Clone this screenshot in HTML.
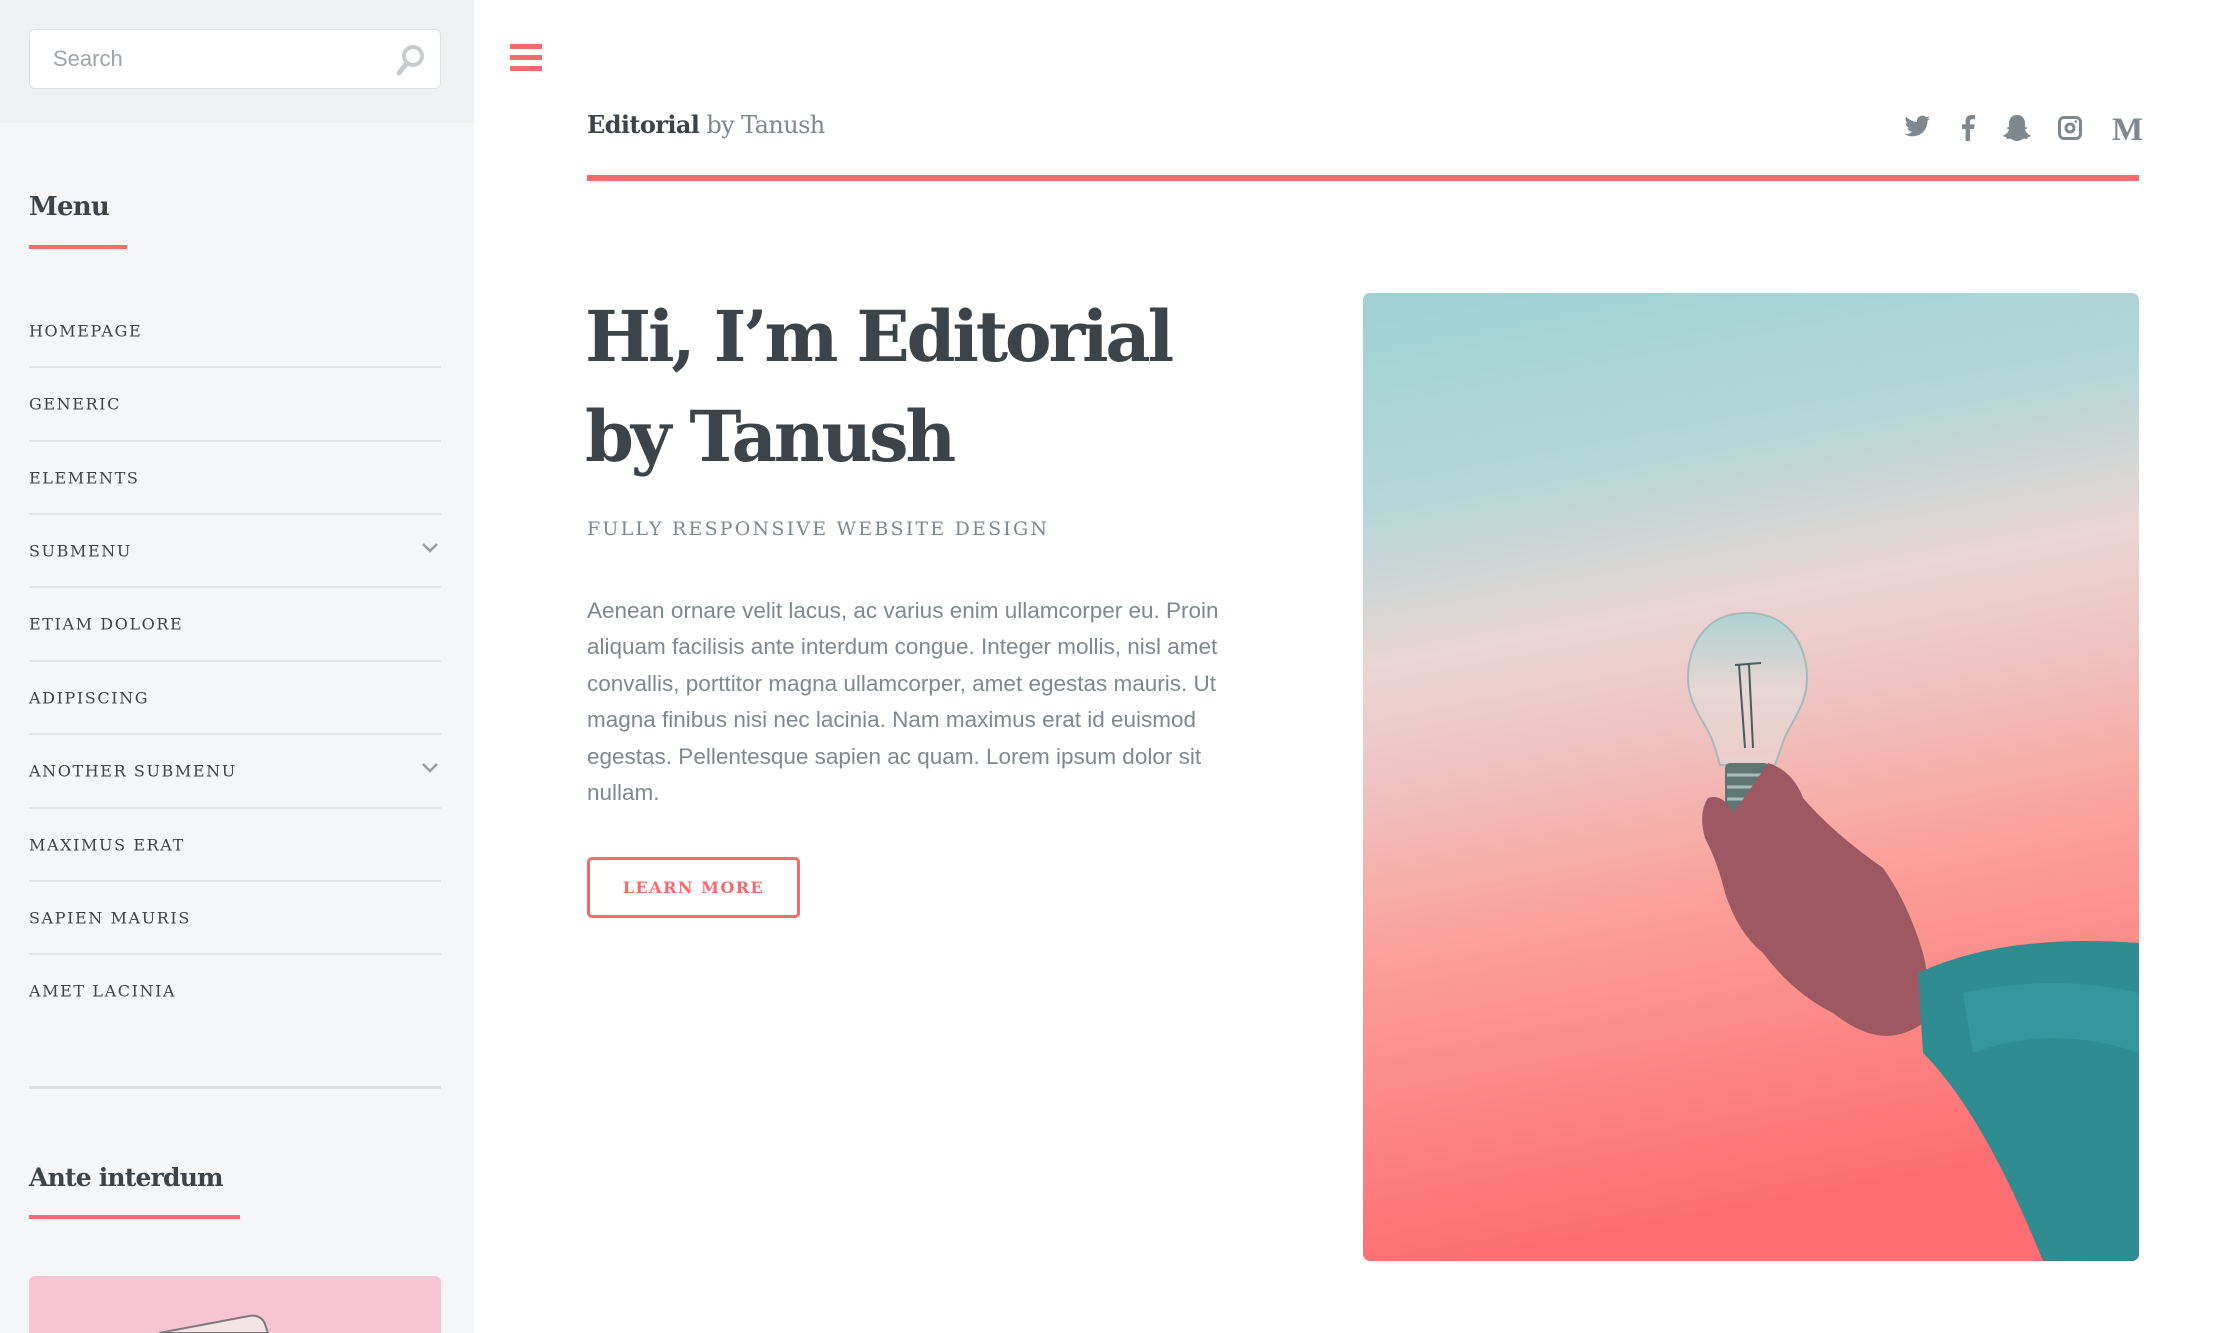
<!DOCTYPE html>
<html><head><meta charset="utf-8"><style>
*{margin:0;padding:0;box-sizing:border-box}
html,body{width:2217px;height:1333px;overflow:hidden;background:#fff}
body{position:relative;font-family:"Liberation Sans",sans-serif}
.serif{font-family:"DejaVu Serif","Liberation Serif",serif}
#side{position:absolute;left:0;top:0;width:474px;height:1333px;background:#f5f6f7;overflow:hidden}
#stop{position:absolute;left:0;top:0;width:474px;height:123px;background:#eff0f2}
#search{position:absolute;left:29px;top:29px;width:412px;height:60px;background:#fff;border:1px solid #dfe1e3;border-radius:6px}
#search span{position:absolute;left:23px;top:16px;font-size:22px;color:#9fa4a8}
.h2{position:absolute;left:29px;font-weight:bold;color:#3d4449;letter-spacing:-0.8px}
.ul{position:absolute;left:29px;height:4px;background:#f56a6a}
.mi{position:absolute;left:29px;width:412px;height:73px;font-size:16px;letter-spacing:1.6px;color:#3d4449}
.mi span{position:absolute;left:0;top:50%;transform:translateY(-50%)}
.sep{position:absolute;left:29px;width:412px;height:2px;background:#e3e5e7}
.chev{position:absolute;right:2px;top:50%;margin-top:-9px}
#ham div{position:absolute;left:510px;width:32px;height:5px;background:#f56a6a}
p.t{font-size:22.5px;line-height:36.4px;color:#7f888f}
</style></head><body>
<div id="side">
<div id="stop"></div>
<div id="search"><span>Search</span>
<svg style="position:absolute;right:14px;top:13px" width="32" height="34" viewBox="0 0 32 34"><circle cx="19" cy="13" r="9" fill="none" stroke="#c9cccf" stroke-width="4"/><line x1="13" y1="20" x2="5" y2="30" stroke="#c9cccf" stroke-width="5" stroke-linecap="round"/></svg></div>
<div class="h2 serif" style="top:192px;font-size:26px">Menu</div>
<div class="ul" style="top:245px;width:98px"></div>
<div class="mi serif" style="top:294px"><span>HOMEPAGE</span></div>
<div class="sep" style="top:366px"></div>
<div class="mi serif" style="top:367px"><span>GENERIC</span></div>
<div class="sep" style="top:440px"></div>
<div class="mi serif" style="top:441px"><span>ELEMENTS</span></div>
<div class="sep" style="top:513px"></div>
<div class="mi serif" style="top:514px"><span>SUBMENU</span><svg class="chev" width="18" height="12" viewBox="0 0 18 12"><path d="M2 2l7 7 7-7" fill="none" stroke="#9a9ea2" stroke-width="2.5"/></svg></div>
<div class="sep" style="top:586px"></div>
<div class="mi serif" style="top:587px"><span>ETIAM DOLORE</span></div>
<div class="sep" style="top:660px"></div>
<div class="mi serif" style="top:661px"><span>ADIPISCING</span></div>
<div class="sep" style="top:733px"></div>
<div class="mi serif" style="top:734px"><span>ANOTHER SUBMENU</span><svg class="chev" width="18" height="12" viewBox="0 0 18 12"><path d="M2 2l7 7 7-7" fill="none" stroke="#9a9ea2" stroke-width="2.5"/></svg></div>
<div class="sep" style="top:807px"></div>
<div class="mi serif" style="top:808px"><span>MAXIMUS ERAT</span></div>
<div class="sep" style="top:880px"></div>
<div class="mi serif" style="top:881px"><span>SAPIEN MAURIS</span></div>
<div class="sep" style="top:953px"></div>
<div class="mi serif" style="top:954px"><span>AMET LACINIA</span></div>
<div style="position:absolute;left:29px;top:1086px;width:412px;height:3px;background:#dee1e3"></div>
<div class="h2 serif" style="top:1163px;font-size:25px">Ante interdum</div>
<div class="ul" style="top:1215px;width:211px"></div>
<svg style="position:absolute;left:29px;top:1276px" width="412" height="57" viewBox="0 0 412 57">
<path d="M6 0h400a6 6 0 0 1 6 6v51H0V6a6 6 0 0 1 6-6z" fill="#f6c4d3"/>
<path d="M130 57 L220 40 Q232 38 236 48 L239 57Z" fill="#f3e4e6" stroke="#7d7a80" stroke-width="2"/>
</svg>
</div>
<div id="ham"><div style="top:44px"></div><div style="top:55px"></div><div style="top:66px"></div></div>
<div class="serif" style="position:absolute;left:587px;top:110px;font-size:24px;color:#3d4449;letter-spacing:-0.6px"><b>Editorial</b> <span style="color:#7f888f">by Tanush</span></div>
<svg style="position:absolute;left:1900px;top:110px" width="250" height="34" viewBox="0 0 250 34">
<g fill="#7f888f">
<path d="M30 8c-1 .5-2 .8-3 .9 1.1-.7 1.9-1.7 2.3-2.9-1 .6-2.1 1-3.3 1.3a5.2 5.2 0 0 0-8.9 4.7C12.8 11.800 8.900 9.700 6.300 6.600c-1.500 2.500-.600 5.400 1.600 6.900-.8 0-1.600-.3-2.300-.6 0 2.500 1.800 4.600 4.200 5.100-.8.200-1.600.300-2.400.100.700 2.100 2.600 3.600 4.900 3.600A10.500 10.500 0 0 1 4.700 24C7 25.500 9.800 26.300 12.700 26.300c9.600 0 15-8.100 14.700-15.400C28.500 10.200 29.400 9.200 30 8z"/>
<path d="M70 31V19h4l.6-4.600H70v-3c0-1.300.4-2.200 2.300-2.200H75V5.100C74.500 5 73 5 71.400 5 68 5 65.600 7.100 65.600 10.900v3.500H62V19h3.600v12z"/>
<path d="M117 5c-5 0-8 3.500-8 8v4l-2 .5c-.5.300 0 1.500 2 2-1 3-3 5-6 6 0 1 2 1.500 3 1.500l1 2c1 0 2.500-.5 4 0 1.500.5 3 2 6 2s4.500-1.500 6-2c1.500-.5 3 0 4 0l1-2c1 0 3-.5 3-1.500-3-1-5-3-6-6 2-.5 2.500-1.700 2-2l-2-.5v-4c0-4.500-3-8-8-8z"/>
<path d="M164 6h12a6 6 0 0 1 6 6v12a6 6 0 0 1-6 6h-12a6 6 0 0 1-6-6V12a6 6 0 0 1 6-6zm0 3a3 3 0 0 0-3 3v12a3 3 0 0 0 3 3h12a3 3 0 0 0 3-3V12a3 3 0 0 0-3-3zm6 3.500a5.500 5.500 0 1 1 0 11 5.500 5.500 0 0 1 0-11zm0 3a2.500 2.500 0 1 0 0 5 2.500 2.500 0 0 0 0-5zm5.800-5.300a1.300 1.300 0 1 1 0 2.600 1.300 1.300 0 0 1 0-2.600z"/>
</g>
<text x="212" y="30" font-family="Liberation Serif,serif" font-weight="bold" font-size="33" fill="#7f888f">M</text>
</svg>
<div style="position:absolute;left:587px;top:175px;width:1552px;height:6px;background:#f56a6a"></div>
<div class="serif" style="position:absolute;left:585px;top:287px;font-size:70px;line-height:100px;font-weight:bold;color:#3d4449;letter-spacing:-3.2px;white-space:nowrap">Hi, I’m Editorial<br>by Tanush</div>
<div class="serif" style="position:absolute;left:587px;top:518px;font-size:19px;letter-spacing:2.2px;color:#7f888f">FULLY RESPONSIVE WEBSITE DESIGN</div>
<div style="position:absolute;left:587px;top:593px;width:690px">
<p class="t">Aenean ornare velit lacus, ac varius enim ullamcorper eu. Proin aliquam facilisis ante interdum congue. Integer mollis, nisl amet convallis, porttitor magna ullamcorper, amet egestas mauris. Ut magna finibus nisi nec lacinia. Nam maximus erat id euismod egestas. Pellentesque sapien ac quam. Lorem ipsum dolor sit nullam.</p></div>
<div class="serif" style="position:absolute;left:587px;top:857px;width:213px;height:61px;border:3px solid #f56a6a;border-radius:5px;color:#f56a6a;font-size:16px;font-weight:bold;letter-spacing:1.5px;text-align:center;line-height:55px">LEARN MORE</div>
<div style="position:absolute;left:1363px;top:293px;width:776px;height:968px;border-radius:7px;overflow:hidden">
<svg width="776" height="968" viewBox="0 0 776 968">
<defs><linearGradient id="g" x1="0" y1="0" x2="0.15" y2="1">
<stop offset="0" stop-color="#9fd2d4"/><stop offset="0.22" stop-color="#b5d7d7"/><stop offset="0.38" stop-color="#e9d5d4"/><stop offset="0.5" stop-color="#efc3c1"/><stop offset="0.68" stop-color="#fb9f98"/><stop offset="1" stop-color="#fd6e72"/></linearGradient>
<linearGradient id="b" x1="0" y1="0" x2="0" y2="1"><stop offset="0" stop-color="#a9d3d3"/><stop offset="0.5" stop-color="#e6d8d6"/><stop offset="1" stop-color="#ecd0ce"/></linearGradient></defs>
<rect width="776" height="968" fill="url(#g)"/>
<path d="M384 320 C340 320 325 355 325 385 C325 415 345 430 352 455 L357 472 L412 472 L418 455 C425 430 444 415 444 385 C444 355 428 320 384 320Z" fill="url(#b)" stroke="#9fb9b9" stroke-width="2" opacity="0.9"/>
<path d="M372 372 L398 370 M376 372 L382 455 M386 372 L390 455" stroke="#4b5b5c" stroke-width="2" fill="none"/>
<rect x="362" y="470" width="44" height="52" rx="5" fill="#5f7673"/>
<path d="M364 482h40M364 494h40M364 506h40" stroke="#a8bdb9" stroke-width="3"/>
<path d="M405 470 Q430 478 440 505 Q470 540 520 575 Q545 610 560 660 Q570 700 560 730 Q520 760 470 720 Q430 700 400 660 Q375 640 362 600 Q355 570 342 545 Q335 520 345 505 Q360 500 370 520 Q385 500 405 470Z" fill="#9d5862"/>
<path d="M555 680 Q640 640 776 650 L776 968 L680 968 Q620 820 560 760Z" fill="#2f8d92"/>
<path d="M600 700 Q690 680 776 700 L776 760 Q690 730 610 760Z" fill="#3a9ea2" opacity="0.6"/>
</svg></div>
</body></html>
